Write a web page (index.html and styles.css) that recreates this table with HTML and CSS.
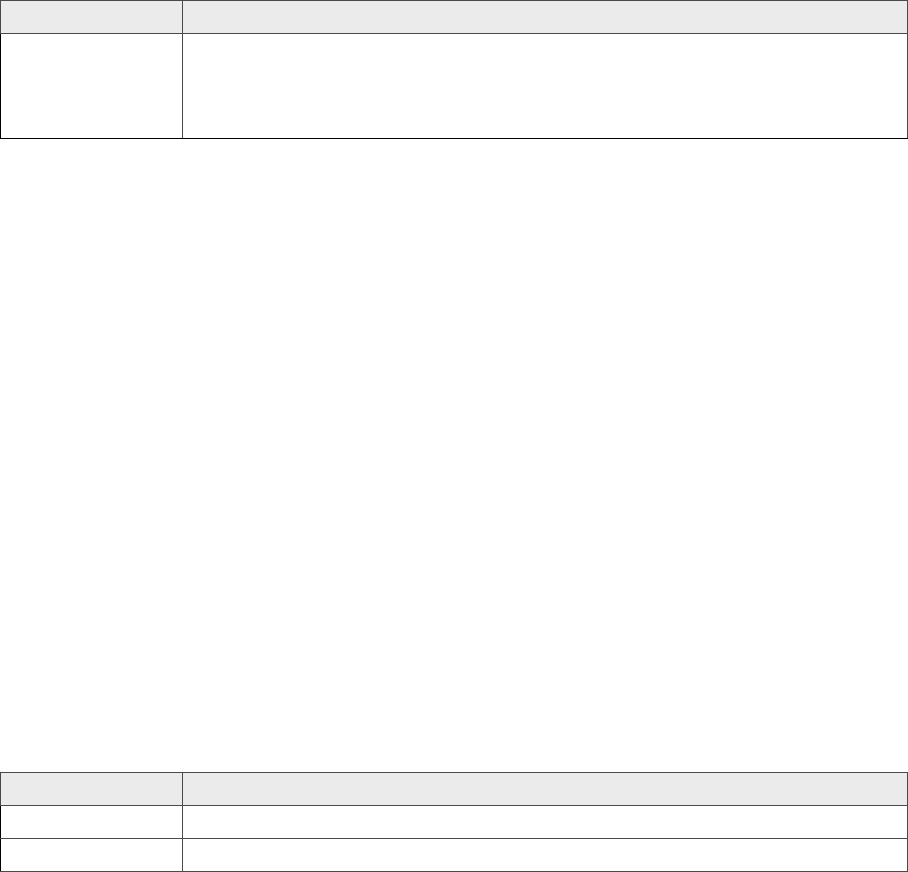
FILE: index.html
```html
<!DOCTYPE html>
<html lang="en">
<head>
    <meta charset="UTF-8">
    <meta name="viewport" content="width=device-width, initial-scale=1.0">
    <title>Tables</title>
    <link rel="stylesheet" href="styles.css">
</head>
<body>
    <div class="page">
        <!-- Top table -->
        <table class="grid grid-top">
            <thead>
                <tr>
                    <th class="col-key"></th>
                    <th></th>
                </tr>
            </thead>
            <tbody>
                <tr class="row-tall">
                    <td></td>
                    <td></td>
                </tr>
            </tbody>
        </table>

        <!-- Bottom table -->
        <table class="grid grid-bottom">
            <thead>
                <tr>
                    <th class="col-key"></th>
                    <th></th>
                </tr>
            </thead>
            <tbody>
                <tr>
                    <td></td>
                    <td></td>
                </tr>
                <tr>
                    <td></td>
                    <td></td>
                </tr>
            </tbody>
        </table>
    </div>
</body>
</html>
```

FILE: styles.css
```css
/* General styling */
* {
    margin: 0;
    padding: 0;
    box-sizing: border-box;
}
body {
    font-family: 'Liberation Sans', Arial, sans-serif;
    font-size: 14px;
    color: #333;
    background-color: #fff;
}
.page {
    display: flex;
    flex-direction: column;
    justify-content: space-between;
    height: 872px;
}

/* Tables */
.grid {
    width: 100%;
    border-collapse: collapse;
    table-layout: fixed;
}
.grid th,
.grid td {
    border: 1px solid #4a4a4a;
    height: 33px;
    padding: 6px 10px;
    text-align: left;
}
.grid th {
    background-color: #ebebeb;
    font-weight: 600;
}
.grid td:first-child {
    border-left-color: #000;
}
.grid-top tbody tr:last-child td {
    border-bottom-color: #000;
}
.col-key {
    width: 182px;
}
.row-tall td {
    height: 105px;
}
```
